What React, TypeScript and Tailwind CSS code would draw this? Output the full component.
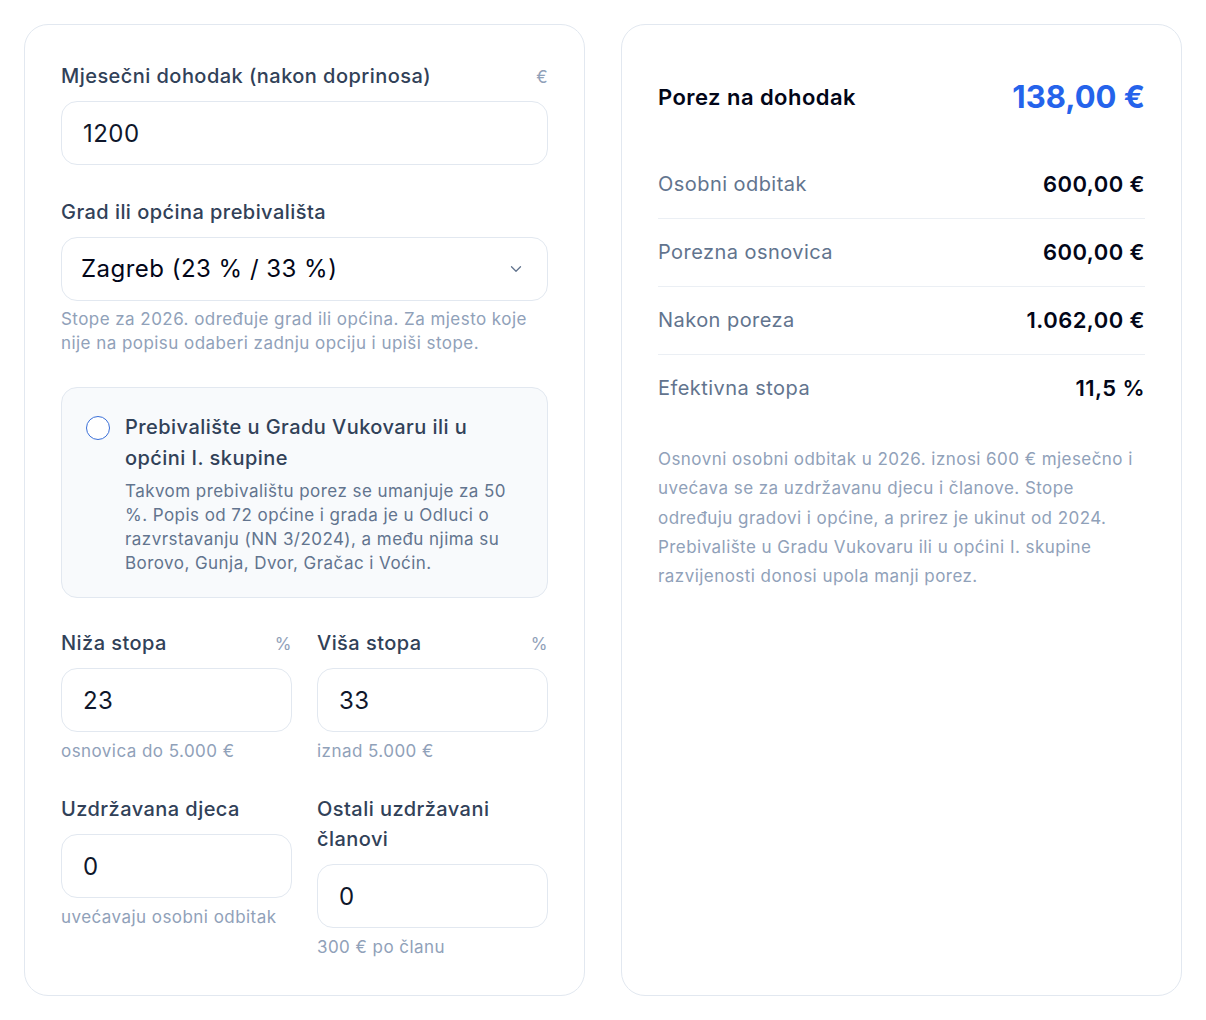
import { ChevronDown } from "lucide-react";

type Row = { label: string; value: string };

const rows: Row[] = [
  { label: "Osobni odbitak", value: "600,00 €" },
  { label: "Porezna osnovica", value: "600,00 €" },
  { label: "Nakon poreza", value: "1.062,00 €" },
  { label: "Efektivna stopa", value: "11,5 %" },
];

function Field({
  label,
  unit,
  value,
  hint,
}: {
  label: string;
  unit?: string;
  value: string;
  hint?: string;
}) {
  return (
    <div>
      <div className="mb-[10px] flex items-baseline justify-between gap-3">
        <span className="text-[20px] leading-[30px] font-medium text-slate-700">
          {label}
        </span>
        {unit && <span className="text-[17px] text-slate-400">{unit}</span>}
      </div>
      <input
        readOnly
        value={value}
        className="block h-16 w-full rounded-2xl border border-slate-200 bg-white px-[21px] text-[24px] tracking-[0.02em] text-slate-900 outline-none"
      />
      {hint && (
        <p className="mt-[7px] text-[17px] leading-6 text-slate-400">{hint}</p>
      )}
    </div>
  );
}

export default function App() {
  return (
    <div className="min-h-screen bg-white p-6 font-['Inter','Noto_Sans',sans-serif] tracking-[0.028em]">
      <div className="flex items-stretch gap-9">
        {/* Inputs */}
        <div className="w-[561px] rounded-3xl border border-slate-200 p-9">
          <Field
            label="Mjesečni dohodak (nakon doprinosa)"
            unit="€"
            value="1200"
          />

          <div className="mt-8">
            <div className="mb-[10px] text-[20px] leading-[30px] font-medium text-slate-700">
              Grad ili općina prebivališta
            </div>
            <div className="flex h-16 items-center justify-between rounded-2xl border border-slate-200 bg-white pr-[22px] pl-[19px]">
              <span className="text-[24px] tracking-[0.02em] text-slate-950">
                Zagreb (23 % / 33 %)
              </span>
              <ChevronDown size={18} strokeWidth={1.75} className="text-slate-500" />
            </div>
            <p className="mt-[6px] text-[17px] leading-6 text-slate-400">
              Stope za 2026. određuje grad ili općina. Za mjesto koje nije na
              popisu odaberi zadnju opciju i upiši stope.
            </p>
          </div>

          <div className="mt-8 flex gap-[15px] rounded-2xl border border-slate-200 bg-slate-50 px-6 pt-6 pb-[22px]">
            <span className="mt-[4px] h-6 w-6 shrink-0 rounded-full border-[1.5px] border-[#3a6fd8] bg-white" />
            <div>
              <div className="text-[20px] leading-[31px] font-medium text-slate-700">
                Prebivalište u Gradu Vukovaru ili u općini I. skupine
              </div>
              <p className="mt-[5px] text-[17px] leading-6 text-slate-500">
                Takvom prebivalištu porez se umanjuje za 50 %. Popis od 72
                općine i grada je u Odluci o razvrstavanju (NN 3/2024), a među
                njima su Borovo, Gunja, Dvor, Gračac i Voćin.
              </p>
            </div>
          </div>

          <div className="mt-[30px] grid grid-cols-2 items-start gap-x-[25px] gap-y-[31px]">
            <Field
              label="Niža stopa"
              unit="%"
              value="23"
              hint="osnovica do 5.000 €"
            />
            <Field
              label="Viša stopa"
              unit="%"
              value="33"
              hint="iznad 5.000 €"
            />
            <Field
              label="Uzdržavana djeca"
              value="0"
              hint="uvećavaju osobni odbitak"
            />
            <Field
              label="Ostali uzdržavani članovi"
              value="0"
              hint="300 € po članu"
            />
          </div>
        </div>

        {/* Result */}
        <div className="w-[561px] rounded-3xl border border-slate-200 p-9">
          <div className="flex h-[72px] items-center justify-between">
            <span className="text-[22px] font-semibold text-slate-950">
              Porez na dohodak
            </span>
            <span className="text-[31px] font-bold tracking-normal text-[#2563eb]">
              138,00 €
            </span>
          </div>

          <div className="mt-[18px]">
            {rows.map((r, i) => (
              <div
                key={r.label}
                className={`flex items-center justify-between py-[18px] ${
                  i < rows.length - 1 ? "border-b border-slate-200/70" : ""
                }`}
              >
                <span className="text-[20px] leading-[31px] text-slate-500">
                  {r.label}
                </span>
                <span className="text-[22px] leading-[31px] font-semibold text-slate-950">
                  {r.value}
                </span>
              </div>
            ))}
          </div>

          <p className="mt-[23px] text-[17px] leading-[29.3px] text-slate-400">
            Osnovni osobni odbitak u 2026. iznosi 600 € mjesečno i uvećava se za
            uzdržavanu djecu i članove. Stope određuju gradovi i općine, a prirez
            je ukinut od 2024. Prebivalište u Gradu Vukovaru ili u općini I.
            skupine razvijenosti donosi upola manji porez.
          </p>
        </div>
      </div>
    </div>
  );
}
